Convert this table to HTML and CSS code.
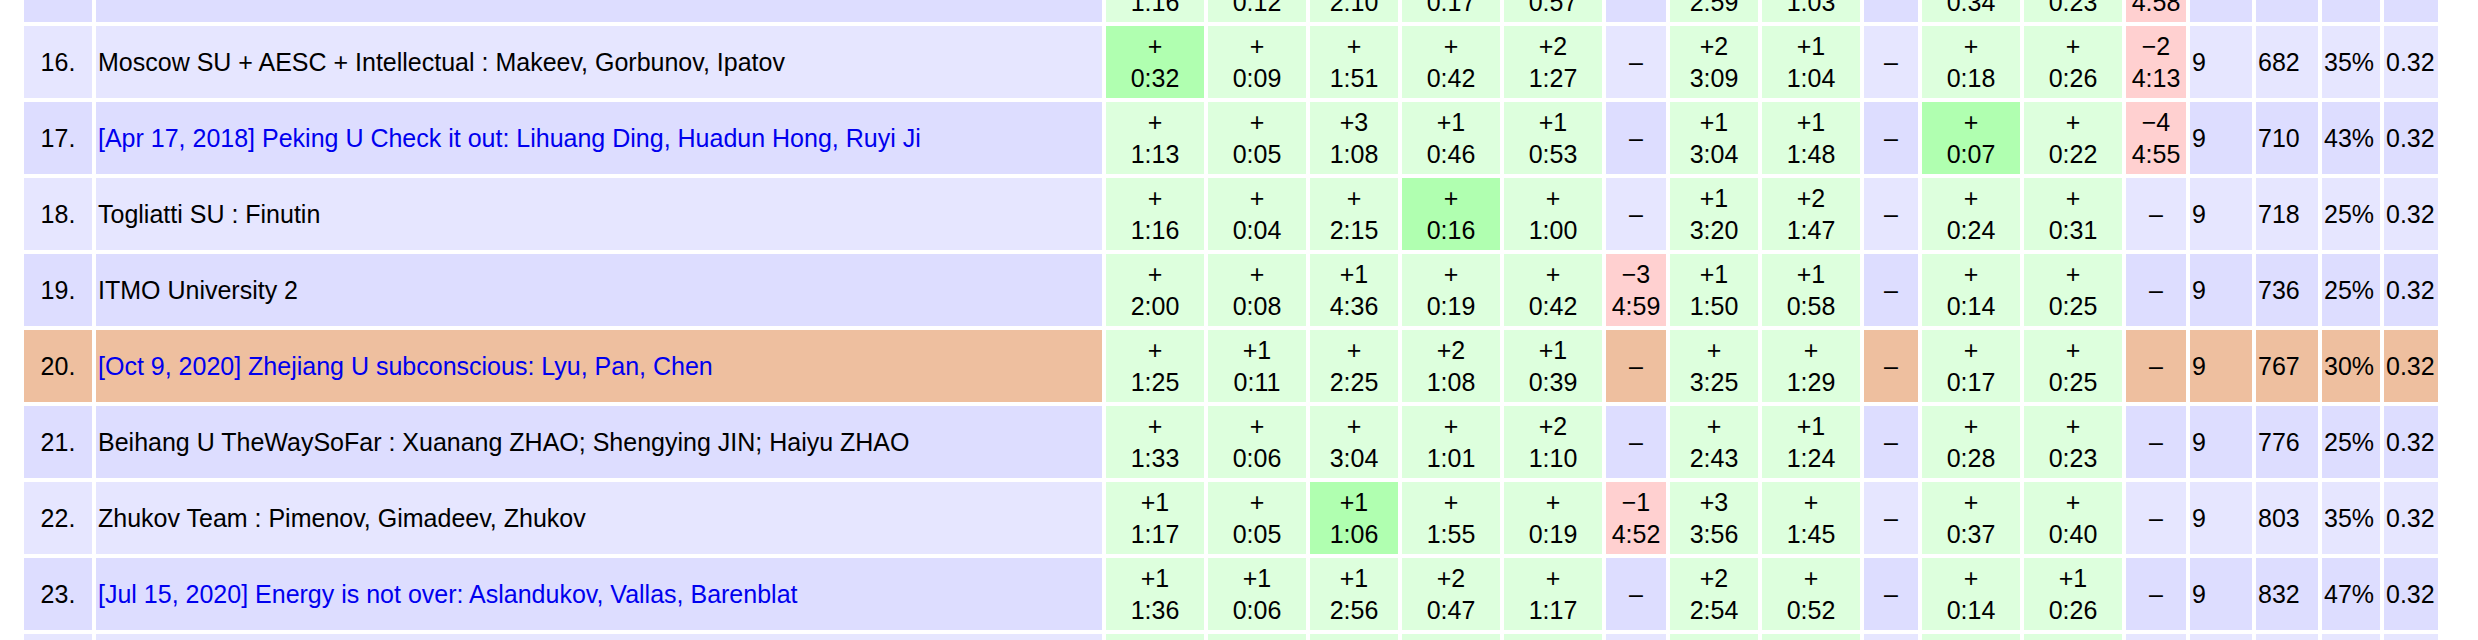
FILE: index.html
```html
<!DOCTYPE html>
<html>
<head>
<meta charset="utf-8">
<title>Standings</title>
<link rel="stylesheet" href="styles.css">
</head>
<body>
<div class="standings">
  <div class="row dark">
    <div class="rank">15.</div><div class="name">Team 15</div>
    <div class="p ok"><span>+</span><span>1:16</span></div>
    <div class="p ok"><span>+</span><span>0:12</span></div>
    <div class="p ok"><span>+</span><span>2:10</span></div>
    <div class="p ok"><span>+</span><span>0:17</span></div>
    <div class="p ok"><span>+</span><span>0:57</span></div>
    <div class="p">–</div>
    <div class="p ok"><span>+</span><span>2:59</span></div>
    <div class="p ok"><span>+</span><span>1:03</span></div>
    <div class="p">–</div>
    <div class="p ok"><span>+</span><span>0:34</span></div>
    <div class="p ok"><span>+</span><span>0:23</span></div>
    <div class="p fail"><span>−1</span><span>4:58</span></div>
    <div class="num">9</div><div class="num">650</div><div class="num">30%</div><div class="num">0.32</div>
  </div>

  <div class="row light">
    <div class="rank">16.</div><div class="name">Moscow SU + AESC + Intellectual : Makeev, Gorbunov, Ipatov</div>
    <div class="p first"><span>+</span><span>0:32</span></div>
    <div class="p ok"><span>+</span><span>0:09</span></div>
    <div class="p ok"><span>+</span><span>1:51</span></div>
    <div class="p ok"><span>+</span><span>0:42</span></div>
    <div class="p ok"><span>+2</span><span>1:27</span></div>
    <div class="p">–</div>
    <div class="p ok"><span>+2</span><span>3:09</span></div>
    <div class="p ok"><span>+1</span><span>1:04</span></div>
    <div class="p">–</div>
    <div class="p ok"><span>+</span><span>0:18</span></div>
    <div class="p ok"><span>+</span><span>0:26</span></div>
    <div class="p fail"><span>−2</span><span>4:13</span></div>
    <div class="num">9</div><div class="num">682</div><div class="num">35%</div><div class="num">0.32</div>
  </div>

  <div class="row dark">
    <div class="rank">17.</div><div class="name"><a href="#">[Apr 17, 2018] Peking U Check it out: Lihuang Ding, Huadun Hong, Ruyi Ji</a></div>
    <div class="p ok"><span>+</span><span>1:13</span></div>
    <div class="p ok"><span>+</span><span>0:05</span></div>
    <div class="p ok"><span>+3</span><span>1:08</span></div>
    <div class="p ok"><span>+1</span><span>0:46</span></div>
    <div class="p ok"><span>+1</span><span>0:53</span></div>
    <div class="p">–</div>
    <div class="p ok"><span>+1</span><span>3:04</span></div>
    <div class="p ok"><span>+1</span><span>1:48</span></div>
    <div class="p">–</div>
    <div class="p first"><span>+</span><span>0:07</span></div>
    <div class="p ok"><span>+</span><span>0:22</span></div>
    <div class="p fail"><span>−4</span><span>4:55</span></div>
    <div class="num">9</div><div class="num">710</div><div class="num">43%</div><div class="num">0.32</div>
  </div>

  <div class="row light">
    <div class="rank">18.</div><div class="name">Togliatti SU : Finutin</div>
    <div class="p ok"><span>+</span><span>1:16</span></div>
    <div class="p ok"><span>+</span><span>0:04</span></div>
    <div class="p ok"><span>+</span><span>2:15</span></div>
    <div class="p first"><span>+</span><span>0:16</span></div>
    <div class="p ok"><span>+</span><span>1:00</span></div>
    <div class="p">–</div>
    <div class="p ok"><span>+1</span><span>3:20</span></div>
    <div class="p ok"><span>+2</span><span>1:47</span></div>
    <div class="p">–</div>
    <div class="p ok"><span>+</span><span>0:24</span></div>
    <div class="p ok"><span>+</span><span>0:31</span></div>
    <div class="p">–</div>
    <div class="num">9</div><div class="num">718</div><div class="num">25%</div><div class="num">0.32</div>
  </div>

  <div class="row dark">
    <div class="rank">19.</div><div class="name">ITMO University 2</div>
    <div class="p ok"><span>+</span><span>2:00</span></div>
    <div class="p ok"><span>+</span><span>0:08</span></div>
    <div class="p ok"><span>+1</span><span>4:36</span></div>
    <div class="p ok"><span>+</span><span>0:19</span></div>
    <div class="p ok"><span>+</span><span>0:42</span></div>
    <div class="p fail"><span>−3</span><span>4:59</span></div>
    <div class="p ok"><span>+1</span><span>1:50</span></div>
    <div class="p ok"><span>+1</span><span>0:58</span></div>
    <div class="p">–</div>
    <div class="p ok"><span>+</span><span>0:14</span></div>
    <div class="p ok"><span>+</span><span>0:25</span></div>
    <div class="p">–</div>
    <div class="num">9</div><div class="num">736</div><div class="num">25%</div><div class="num">0.32</div>
  </div>

  <div class="row mine">
    <div class="rank">20.</div><div class="name"><a href="#">[Oct 9, 2020] Zhejiang U subconscious: Lyu, Pan, Chen</a></div>
    <div class="p ok"><span>+</span><span>1:25</span></div>
    <div class="p ok"><span>+1</span><span>0:11</span></div>
    <div class="p ok"><span>+</span><span>2:25</span></div>
    <div class="p ok"><span>+2</span><span>1:08</span></div>
    <div class="p ok"><span>+1</span><span>0:39</span></div>
    <div class="p">–</div>
    <div class="p ok"><span>+</span><span>3:25</span></div>
    <div class="p ok"><span>+</span><span>1:29</span></div>
    <div class="p">–</div>
    <div class="p ok"><span>+</span><span>0:17</span></div>
    <div class="p ok"><span>+</span><span>0:25</span></div>
    <div class="p">–</div>
    <div class="num">9</div><div class="num">767</div><div class="num">30%</div><div class="num">0.32</div>
  </div>

  <div class="row dark">
    <div class="rank">21.</div><div class="name">Beihang U TheWaySoFar : Xuanang ZHAO; Shengying JIN; Haiyu ZHAO</div>
    <div class="p ok"><span>+</span><span>1:33</span></div>
    <div class="p ok"><span>+</span><span>0:06</span></div>
    <div class="p ok"><span>+</span><span>3:04</span></div>
    <div class="p ok"><span>+</span><span>1:01</span></div>
    <div class="p ok"><span>+2</span><span>1:10</span></div>
    <div class="p">–</div>
    <div class="p ok"><span>+</span><span>2:43</span></div>
    <div class="p ok"><span>+1</span><span>1:24</span></div>
    <div class="p">–</div>
    <div class="p ok"><span>+</span><span>0:28</span></div>
    <div class="p ok"><span>+</span><span>0:23</span></div>
    <div class="p">–</div>
    <div class="num">9</div><div class="num">776</div><div class="num">25%</div><div class="num">0.32</div>
  </div>

  <div class="row light">
    <div class="rank">22.</div><div class="name">Zhukov Team : Pimenov, Gimadeev, Zhukov</div>
    <div class="p ok"><span>+1</span><span>1:17</span></div>
    <div class="p ok"><span>+</span><span>0:05</span></div>
    <div class="p first"><span>+1</span><span>1:06</span></div>
    <div class="p ok"><span>+</span><span>1:55</span></div>
    <div class="p ok"><span>+</span><span>0:19</span></div>
    <div class="p fail"><span>−1</span><span>4:52</span></div>
    <div class="p ok"><span>+3</span><span>3:56</span></div>
    <div class="p ok"><span>+</span><span>1:45</span></div>
    <div class="p">–</div>
    <div class="p ok"><span>+</span><span>0:37</span></div>
    <div class="p ok"><span>+</span><span>0:40</span></div>
    <div class="p">–</div>
    <div class="num">9</div><div class="num">803</div><div class="num">35%</div><div class="num">0.32</div>
  </div>

  <div class="row dark">
    <div class="rank">23.</div><div class="name"><a href="#">[Jul 15, 2020] Energy is not over: Aslandukov, Vallas, Barenblat</a></div>
    <div class="p ok"><span>+1</span><span>1:36</span></div>
    <div class="p ok"><span>+1</span><span>0:06</span></div>
    <div class="p ok"><span>+1</span><span>2:56</span></div>
    <div class="p ok"><span>+2</span><span>0:47</span></div>
    <div class="p ok"><span>+</span><span>1:17</span></div>
    <div class="p">–</div>
    <div class="p ok"><span>+2</span><span>2:54</span></div>
    <div class="p ok"><span>+</span><span>0:52</span></div>
    <div class="p">–</div>
    <div class="p ok"><span>+</span><span>0:14</span></div>
    <div class="p ok"><span>+1</span><span>0:26</span></div>
    <div class="p">–</div>
    <div class="num">9</div><div class="num">832</div><div class="num">47%</div><div class="num">0.32</div>
  </div>

  <div class="row light tail">
    <div class="rank"></div><div class="name"></div>
    <div class="p ok"></div>
    <div class="p ok"></div>
    <div class="p ok"></div>
    <div class="p ok"></div>
    <div class="p ok"></div>
    <div class="p"></div>
    <div class="p ok"></div>
    <div class="p ok"></div>
    <div class="p"></div>
    <div class="p ok"></div>
    <div class="p ok"></div>
    <div class="p"></div>
    <div class="num"></div><div class="num"></div><div class="num"></div><div class="num"></div>
  </div>
</div>
</body>
</html>
```

FILE: styles.css
```css
html, body {
  margin: 0;
  padding: 0;
  background: #ffffff;
}

body {
  font-family: "Liberation Sans", Arial, Helvetica, sans-serif;
  font-size: 25px;
  color: #000000;
  overflow: hidden;
  height: 640px;
}

.standings {
  display: flex;
  flex-direction: column;
  gap: 4px;
  margin: -50px 0 0 24px;
}

.row {
  display: grid;
  grid-template-columns: 68px 1006px 98px 98px 88px 98px 98px 60px 88px 98px 54px 98px 98px 60px 62px 62px 58px 54px;
  column-gap: 4px;
  height: 72px;
}

.row.tail {
  height: 6px;
}

.row > div {
  display: flex;
  align-items: center;
  white-space: nowrap;
  overflow: hidden;
}

.row.light > div { background: #e6e6ff; }
.row.dark > div { background: #ddddff; }
.row.mine > div { background: #eebf9f; }

.rank {
  justify-content: center;
}

.name {
  padding-left: 2px;
}

.name a {
  color: #0000ee;
  text-decoration: none;
}

.row > .p {
  flex-direction: column;
  justify-content: center;
  align-items: center;
  line-height: 32px;
}

.row > .p.ok { background: #ddffdd; }
.row > .p.first { background: #b0ffb0; }
.row > .p.fail { background: #ffd0d0; }

.num {
  padding-left: 2px;
}
```
